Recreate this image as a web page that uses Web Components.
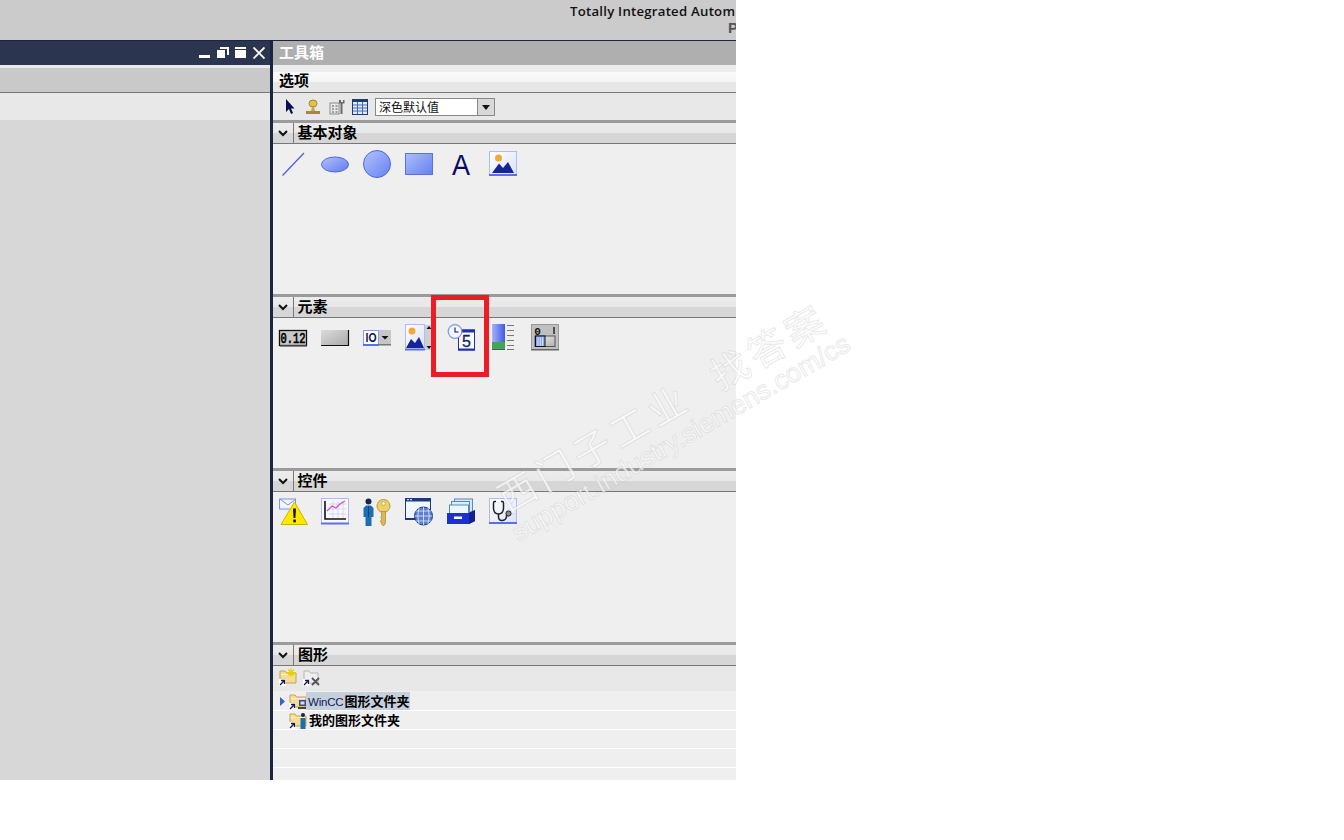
<!DOCTYPE html>
<html>
<head>
<meta charset="utf-8">
<title>工具箱</title>
<style>
html,body{margin:0;padding:0;background:#fff;}
body{width:1344px;height:840px;overflow:hidden;position:relative;font-family:"Liberation Sans","Noto Sans CJK SC",sans-serif;}
</style>
</head>
<body>
<tia-app>
    <tia-left-panel slot="left"></tia-left-panel>
    <tia-toolbox slot="right">
        <tool-section label="基本对象" height="150">
            <tool-icon name="line"></tool-icon><tool-icon name="ellipse"></tool-icon><tool-icon name="circle"></tool-icon><tool-icon name="rect"></tool-icon><tool-icon name="text"></tool-icon><tool-icon name="image"></tool-icon>
        </tool-section>
        <tool-section label="元素" height="150">
            <tool-icon name="iofield"></tool-icon><tool-icon name="button"></tool-icon><tool-icon name="symbolic"></tool-icon><tool-icon name="graphicio"></tool-icon><tool-icon name="clock"></tool-icon><tool-icon name="bar"></tool-icon><tool-icon name="switch"></tool-icon>
        </tool-section>
        <tool-section label="控件" height="150">
            <tool-icon name="alarm"></tool-icon><tool-icon name="trend"></tool-icon><tool-icon name="user"></tool-icon><tool-icon name="browser"></tool-icon><tool-icon name="recipe"></tool-icon><tool-icon name="diag"></tool-icon>
        </tool-section>
        <graphics-section></graphics-section>
    </tia-toolbox>
</tia-app>
<red-mark></red-mark>
<water-mark></water-mark>

<script>
//svg bodies for the toolbox icons, all on a 28x28 box
const ICONS = {
    line: `<path d="M3.5 25.5L25 3" stroke="#4a5ce6" stroke-width="1.2" fill="none"/>`,
    ellipse: `<defs><linearGradient id="g" x1="0" y1="0" x2="1" y2="1"><stop offset="0" stop-color="#b4c4fb"/><stop offset="1" stop-color="#5f78f0"/></linearGradient></defs>
        <ellipse cx="14" cy="14.5" rx="13.5" ry="7.5" fill="url(#g)" stroke="#4e66e6"/>`,
    circle: `<defs><linearGradient id="g" x1="0" y1="0" x2="1" y2="1"><stop offset="0" stop-color="#b4c4fb"/><stop offset="1" stop-color="#6580f2"/></linearGradient></defs>
        <circle cx="14" cy="14" r="13.5" fill="url(#g)" stroke="#4e66e6"/>`,
    rect: `<defs><linearGradient id="g" x1="0" y1="0" x2="1" y2="1"><stop offset="0" stop-color="#aebffa"/><stop offset="1" stop-color="#6580f2"/></linearGradient></defs>
        <rect x=".5" y="3.5" width="27" height="21" fill="url(#g)" stroke="#5a70ea"/>`,
    text: `<text x="14" y="25" text-anchor="middle" font-family="Liberation Sans" font-size="30" fill="#0a0a66" textLength="18" lengthAdjust="spacingAndGlyphs">A</text>`,
    image: `<defs><linearGradient id="g" x1="0" y1="0" x2="1" y2="1"><stop offset="0" stop-color="#fff"/><stop offset="1" stop-color="#d9e2fb"/></linearGradient></defs>
        <rect x=".5" y="1.5" width="27" height="24" fill="url(#g)" stroke="#b0bcf0"/>
        <rect x="0" y="24" width="28" height="2" fill="#5a70ea"/>
        <circle cx="9.5" cy="8" r="3.5" fill="#f3a93a"/>
        <path d="M3 23L10 13.5L14 18L19 12L25 23Z" fill="#15249c"/>`,
    iofield: `<rect x=".5" y="6.5" width="27" height="15" fill="#c8c8c8" stroke="#111" stroke-width="1.300"/><rect x="1" y="21" width="27" height="1.5" fill="#444"/>
        <text x="14" y="19" text-anchor="middle" font-family="Liberation Mono" font-size="15" fill="#000" stroke="#000" stroke-width=".7" textLength="25" lengthAdjust="spacingAndGlyphs">0.12</text>`,
    button: `<defs><linearGradient id="g" x1="0" y1="0" x2="1" y2="1"><stop offset="0" stop-color="#dcdcdc"/><stop offset="1" stop-color="#a8a8a8"/></linearGradient></defs>
        <rect x="0" y="6" width="28" height="16" fill="url(#g)"/><path d="M0 21.500H27.500V6" fill="none" stroke="#111" stroke-width="1.2"/>`,
    symbolic: `<rect x=".5" y="6.5" width="15" height="15" fill="#fff" stroke="#8a9cf0"/><rect x="0" y="20" width="16" height="2" fill="#5a70ea"/>
        <text x="8" y="18" text-anchor="middle" font-family="Liberation Sans" font-weight="700" font-size="13" fill="#10105e" textLength="11" lengthAdjust="spacingAndGlyphs">IO</text>
        <rect x="16" y="6" width="12" height="15" fill="#c6c6c6"/><rect x="16" y="20" width="12" height="1.5" fill="#777"/>
        <path d="M18.5 12H25.5L22 15.5Z" fill="#111"/>`,
    graphicio: `<defs><linearGradient id="g" x1="0" y1="0" x2="1" y2="1"><stop offset="0" stop-color="#fff"/><stop offset="1" stop-color="#d9e2fb"/></linearGradient></defs>
        <rect x=".5" y=".5" width="19" height="25" fill="url(#g)" stroke="#b0bcf0"/><rect x="0" y="24.5" width="20" height="2" fill="#5a70ea"/>
        <circle cx="7" cy="7" r="3.5" fill="#f3a93a"/><path d="M1 24L6 15L10 19L14 13L19 24Z" fill="#15249c"/>
        <rect x="20" y="1" width="8" height="25" fill="#cfcfcf"/><path d="M21.5 5H26.5L24 2ZM21.5 22H26.5L24 25Z" fill="#111"/>`,
    clock: `<rect x="11.5" y="6" width="16" height="20" fill="#fff" stroke="#1d2fb4"/><rect x="11" y="5.5" width="17" height="3" fill="#1d2fb4"/><rect x="11" y="24.5" width="17" height="2" fill="#1d2fb4"/>
        <text x="19.5" y="23" text-anchor="middle" font-family="Liberation Sans" font-size="16" fill="#0f1a66" stroke="#0f1a66" stroke-width=".3">5</text>
        <circle cx="8" cy="7.5" r="6.8" fill="#f3f5ff" stroke="#8094ee" stroke-width="1.2"/><path d="M8 3.5V8H11.5" fill="none" stroke="#10185e" stroke-width="1.1"/>`,
    bar: `<defs><linearGradient id="g" x1="0" y1="0" x2="1" y2="0"><stop offset="0" stop-color="#a3b4f8"/><stop offset="1" stop-color="#3f5ae8"/></linearGradient></defs>
        <rect x="3" y="0" width="13" height="18" fill="url(#g)"/><rect x="3" y="18" width="13" height="6.5" fill="#3fa55a"/><rect x="3" y="24.5" width="13" height="1.5" fill="#2c6a3c"/>
        <path d="M18 1.500H25M18 6.500H25M18 11.500H25M18 16.500H25M18 21.500H25M18 25.500H25" stroke="#777" stroke-width="1"/>`,
    'switch': `<defs><linearGradient id="g" x1="0" y1="0" x2="1" y2="1"><stop offset="0" stop-color="#f2f2f2"/><stop offset="1" stop-color="#b0b0b0"/></linearGradient></defs>
        <rect x=".5" y=".5" width="27" height="25" fill="#c0c0c0" stroke="#999"/><rect x="0" y="25" width="28" height="1.5" fill="#666"/>
        <text x="6.5" y="10.5" text-anchor="middle" font-family="Liberation Mono" font-weight="700" font-size="11" fill="#111">0</text><path d="M23 3V10" stroke="#111" stroke-width="1.3"/>
        <rect x="4" y="12" width="20" height="10.5" fill="url(#g)" stroke="#555"/>
        <rect x="4.5" y="12" width="9.5" height="10.5" fill="#8ea4f6" stroke="#111"/><path d="M7 13V22M9.3 13V22M11.6 13V22" stroke="#d8e0ff"/>`,
    alarm: `<rect x="0.500" y="1" width="16" height="10" fill="#f2f4ff" stroke="#7d90ea"/><path d="M1 1L9 7L17 1" fill="none" stroke="#7d90ea"/>
        <path d="M15.500 4L28.500 26.500H2Z" fill="#ffe900" stroke="#c9b400"/><path d="M14 10.500H17L16.400 20H14.600Z" fill="#111"/><rect x="14.300" y="21.500" width="2.500" height="2.800" fill="#111"/>`,
    trend: `<rect x=".5" y=".5" width="27" height="25" fill="#f7f8ff" stroke="#b0bcf0"/><rect x="0" y="24.5" width="28" height="2" fill="#5a70ea"/>
        <path d="M8 6H25M8 11H25M8 16H25M12 3V20M17 3V20M22 3V20" stroke="#d5d7e6"/>
        <path d="M4 3V21H25" fill="none" stroke="#111" stroke-width="1.6"/><path d="M6 13L11 8L15 10L19 6L24 3" fill="none" stroke="#d24be0" stroke-width="1.3"/>`,
    user: `<circle cx="5.500" cy="3.500" r="3" fill="#1a2250"/>
        <path d="M.5 10L3 7.500H8L10.500 10V19H8.500V28H2.500V19H.5Z" fill="#1c6eb2"/><path d="M5.500 8V19" stroke="#0f3f78"/>
        <circle cx="20.500" cy="8" r="6.500" fill="#f0cf6a" stroke="#b79a3a"/><circle cx="20.500" cy="5.500" r="1.800" fill="#fff" stroke="#a08a38" stroke-width=".6"/>
        <path d="M18.500 13.500H22.500V25L20.500 28L18.500 26V24.500L17 23.500L18.500 22V20.500L17.500 19.500L18.500 18.500Z" fill="#ddb850" stroke="#a08a38" stroke-width=".7"/>`,
    browser: `<rect x=".5" y=".5" width="25" height="21" fill="#f4f6ff" stroke="#1b3a7c"/><rect x="0" y="0" width="26" height="3.5" fill="#1b3a7c"/>
        <path d="M2 1.700H4M5 1.700H7" stroke="#fff"/><rect x="0" y="20" width="12" height="2" fill="#1b3a7c"/>
        <circle cx="18.500" cy="18" r="9" fill="#5d7fd0" stroke="#1a3b8a"/>
        <path d="M9.500 18H27.500M11 13H26M11 23H26M18.500 9V27M14 10Q11.500 18 14 26M23 10Q25.500 18 23 26" fill="none" stroke="#e4eaff" stroke-width=".8"/>`,
    recipe: `<rect x="7.500" y="1" width="18" height="13" fill="#d4e7f7" stroke="#5a89b8"/><rect x="4.500" y="3.500" width="18" height="13" fill="#dcecf9" stroke="#5a89b8"/><rect x="2.500" y="7" width="19" height="12" fill="#eef6fd" stroke="#5a89b8"/>
        <path d="M0 15H22L28 12V23L22 26H0Z" fill="#1c2fd0"/><path d="M22 15V26L28 23V12Z" fill="#142090"/><rect x="7" y="18.500" width="8" height="2.500" fill="#fff"/>`,
    diag: `<defs><linearGradient id="g" x1="0" y1="0" x2="1" y2="1"><stop offset="0" stop-color="#fff"/><stop offset="1" stop-color="#dbe3fb"/></linearGradient></defs>
        <rect x=".5" y=".5" width="27" height="25" fill="url(#g)" stroke="#b0bcf0"/><rect x="0" y="24" width="28" height="2" fill="#5a70ea"/>
        <path d="M7 3.500H5.500Q4.500 3.500 4.500 5V10.500Q5 16 9.500 16Q14 16 14.500 10.500V5Q14.500 3.500 13.500 3.500H12" fill="none" stroke="#222" stroke-width="1.5"/>
        <path d="M9.500 16V19.500Q10 23 13.500 22.500Q17 22 17.500 19V17" fill="none" stroke="#222" stroke-width="1.5"/><circle cx="19.500" cy="15.500" r="2.600" fill="#8a8a8a" stroke="#222"/>`
}

//outer frame: title strip on top, then the two panels
class TiaApp extends HTMLElement{
    constructor(){
        super();
        this.attachShadow({mode: 'open'}).innerHTML = `
        <style>
            :host{display:flex;flex-direction:column;width:736px;height:780px;overflow:hidden;background:#cbcbcb;}
            .top{height:40px;flex:none;background:#cbcbcb;box-sizing:border-box;padding:3px 0 0 570px;white-space:nowrap;overflow:hidden;}
            .name{font:13.2px/17px "Open Sans","Liberation Sans",sans-serif;font-weight:600;color:#111;letter-spacing:.24px;}
            .portal{font:bold 15px/16px "Liberation Sans",sans-serif;color:#555;margin-left:158px;}
            .main{flex:1;display:flex;min-height:0;border-top:1px solid #1c2540;}
            .left{width:270px;flex:none;display:flex;}
            .bar{width:3px;flex:none;background:#1c2540;}
            .right{flex:1;min-width:0;display:flex;overflow:hidden;}
            ::slotted(*){flex:1;min-width:0;}
        </style>
        <div class="top">
            <div class="name">Totally Integrated Autom</div>
            <div class="portal">P</div>
        </div>
        <div class="main">
            <div class="left"><slot name="left"></slot></div>
            <div class="bar"></div>
            <div class="right"><slot name="right"></slot></div>
        </div>
        `
    }
}

class TiaLeftPanel extends HTMLElement{
    constructor(){
        super();
        this.attachShadow({mode: 'open'}).innerHTML = `
        <style>
            :host{display:flex;flex-direction:column;background:#d7d7d7;}
            .title{height:24px;background:#2c3550;display:flex;justify-content:flex-end;align-items:center;padding-right:5px;gap:6px;}
            .title svg{display:block;width:12px;height:12px;fill:#fff;}
            .gap{height:3px;background:#e8e8e8;}
            .head{height:24px;background:#c9c9c9;border-bottom:1px solid #777;}
            .row{height:27px;background:#e8e8e8;}
        </style>
        <div class="title">
            <svg viewBox="0 0 12 12"><rect x="0" y="8" width="11" height="3"/></svg>
            <svg viewBox="0 0 12 12"><path d="M3 0H12V8H10V2H3Z"/><rect x="0" y="3" width="8" height="8"/></svg>
            <svg viewBox="0 0 12 12"><rect x="0" y="0" width="11" height="2"/><rect x="0" y="3" width="11" height="8"/></svg>
            <svg viewBox="0 0 12 12"><path d="M.5 .5L11.500 11.500M11.500 .5L.5 11.500" stroke="#fff" stroke-width="1.9"/></svg>
        </div>
        <div class="gap"></div>
        <div class="head"></div>
        <div class="row"></div>
        `
    }
}

class TiaToolbox extends HTMLElement{
    constructor(){
        super();
        this.attachShadow({mode: 'open'}).innerHTML = `
        <style>
            :host{display:block;background:#efefef;font-family:"Noto Sans CJK SC",sans-serif;height:739px;overflow:hidden;}
            .title{height:24px;background:#afafaf;color:#fff;font-size:15px;font-weight:700;line-height:21px;padding-left:6px;}
            .gap{height:7px;background:#ececec;}
            .opt{height:20px;background:linear-gradient(#fbfbfb 0,#f4f4f4 50%,#e6e6e6 50%,#e6e6e6 100%);border-bottom:1px solid #777;color:#000;font-size:15px;font-weight:700;line-height:16px;padding-left:6px;}
            .tools{height:27px;background:#e8e8e8;display:flex;align-items:center;padding-left:12px;box-sizing:border-box;}
            .tools svg{display:block;width:16px;height:16px;flex:none;margin-right:7.5px;}
            .tools svg.arrow{width:10px;margin-right:10px;}
        </style>
        <div class="title">工具箱</div>
        <div class="gap"></div>
        <div class="opt">选项</div>
        <div class="tools">
            <svg class="arrow" viewBox="0 0 10 16"><path d="M1 0V13L4 10L6 15L8 14L6 9.500H9.500Z" fill="#0a0f4e"/></svg>
            <svg viewBox="0 0 16 16"><ellipse cx="8" cy="4.500" rx="4" ry="3.500" fill="#e3c24a" stroke="#a5872a"/><path d="M7 8H9L10 12H6Z" fill="#c9a838"/><rect x="1" y="12" width="14" height="3" fill="#a78a2c"/></svg>
            <svg viewBox="0 0 16 16"><rect x="1" y="4" width="9" height="11" fill="#e8e8e8" stroke="#8a8a8a"/><path d="M3 7H5M6.500 7H8.500M3 10H5M6.500 10H8.500M3 13H5M6.500 13H8.500" stroke="#555"/><path d="M10 1V4.500H11.500V15H13.500V4.500H15.500V1H14V3H12V1Z" fill="#6a6a6a"/></svg>
            <svg viewBox="0 0 16 16"><rect x=".5" y=".5" width="15" height="15" fill="#e6ecfb" stroke="#1c3a7c"/><rect x="0" y="0" width="16" height="3" fill="#1c3a7c"/><path d="M5.500 3V15M10.500 3V15M1 6H15M1 9H15M1 12H15" stroke="#3f66b8"/></svg>
            <tool-select value="深色默认值"></tool-select>
        </div>
        <slot></slot>
        `
    }
}

class ToolSelect extends HTMLElement{
    constructor(){
        super();
        this.attachShadow({mode: 'open'}).innerHTML = `
        <style>
            :host{display:flex;width:120px;height:18px;box-sizing:border-box;border:1px solid #888;background:#fff;flex:none;margin:1px 0 0 -.5px;}
            .val{flex:1;font:12px/16px "Noto Sans CJK SC",sans-serif;color:#111;padding-left:3px;}
            .btn{width:16px;background:#d8d8d8;border-left:1px solid #888;display:flex;align-items:center;justify-content:center;}
            .btn svg{width:8px;height:5px;display:block;}
        </style>
        <div class="val"></div>
        <div class="btn"><svg viewBox="0 0 8 5"><path d="M0 0H8L4 5Z" fill="#111"/></svg></div>
        `
    }
    connectedCallback(){
        this.shadowRoot.querySelector('.val').innerText = this.getAttribute('value')
    }
}

//collapsible pane of the toolbox: gray rule, header, icon row
class ToolSection extends HTMLElement{
    constructor(){
        super();
        this.attachShadow({mode: 'open'}).innerHTML = `
        <style>
            :host{display:block;font-family:"Noto Sans CJK SC",sans-serif;}
            .rule{height:3px;background:#9b9b9b;}
            .head{height:20px;display:flex;background:linear-gradient(#ececec 0,#e8e8e8 50%,#d6d6d6 50%,#d6d6d6 100%);border-bottom:1px solid #777;}
            .chev{width:20px;flex:none;border-right:1px solid #777;display:flex;align-items:center;justify-content:center;}
            .chev svg{width:10px;height:7px;display:block;}
            .label{padding-left:3.500px;font-size:15px;font-weight:700;line-height:18px;color:#000;}
            .body{display:flex;gap:14px;align-items:flex-start;padding:6px 0 0 6px;box-sizing:border-box;background:#efefef;}
        </style>
        <div class="rule"></div>
        <div class="head">
            <div class="chev"><svg viewBox="0 0 10 7"><path d="M1 1L5 5L9 1" fill="none" stroke="#111" stroke-width="2"/></svg></div>
            <div class="label"></div>
        </div>
        <div class="body"><slot></slot></div>
        `
    }
    connectedCallback(){
        this.shadowRoot.querySelector('.label').innerText = this.getAttribute('label')
        this.shadowRoot.querySelector('.body').style.height = this.getAttribute('height') + 'px'
    }
}

class ToolIcon extends HTMLElement{
    constructor(){
        super();
        this.attachShadow({mode: 'open'})
    }
    connectedCallback(){
        this.shadowRoot.innerHTML = `
        <style>
            :host{display:block;width:28px;height:28px;flex:none;}
            svg{display:block;overflow:visible;}
        </style>
        <svg width="28" height="28" viewBox="0 0 28 28">${ICONS[this.getAttribute('name')]}</svg>
        `
    }
}

//last pane, holds a small toolbar and the folder tree
class GraphicsSection extends HTMLElement{
    constructor(){
        super();
        const folder = `<path d="M1 3H6L7.500 5H17V15H1Z" fill="#f8dc92" stroke="#c8a150"/><path d="M2 6H16V7H2Z" fill="#fff3cf"/>`
        const link = `<rect x="0" y="11" width="6.500" height="7" fill="#fff"/><path d="M1 17L5 13M2 12.500H5.500V16" fill="none" stroke="#10185e" stroke-width="1.300"/>`
        this.attachShadow({mode: 'open'}).innerHTML = `
        <style>
            :host{display:block;font-family:"Noto Sans CJK SC",sans-serif;}
            .rule{height:3px;background:#9b9b9b;}
            .head{height:20px;display:flex;background:linear-gradient(#ececec 0,#e8e8e8 50%,#d6d6d6 50%,#d6d6d6 100%);border-bottom:1px solid #777;}
            .chev{width:20px;flex:none;border-right:1px solid #777;display:flex;align-items:center;justify-content:center;}
            .chev svg{width:10px;height:7px;display:block;}
            .label{padding-left:4px;font-size:15px;font-weight:700;line-height:18px;color:#000;}
            .tools{height:26px;background:linear-gradient(#e8e8e8 25px,#efefef 25px);display:flex;gap:6px;padding:2px 0 0 6px;box-sizing:border-box;}
            svg.i{width:18px;height:18px;display:block;flex:none;}
            .row{height:18px;border-bottom:1px solid #fff;background:#efefef;display:flex;align-items:center;padding-left:6px;font-size:13px;font-weight:700;color:#000;line-height:18px;}
            .tw{width:10px;flex:none;}
            .tw svg{display:block;width:5px;height:9px;margin-left:1px;}
            .txt{padding:0 1px 0 2px;white-space:nowrap;}
            .sel{background:#c5d0dc;margin-left:-1px;}
            .plain{margin-left:0;}
            .w{font:11.500px "Liberation Sans",sans-serif;color:#10185e;letter-spacing:-.2px;margin-right:1px;}
        </style>
        <div class="rule"></div>
        <div class="head">
            <div class="chev"><svg viewBox="0 0 10 7"><path d="M1 1L5 5L9 1" fill="none" stroke="#111" stroke-width="2"/></svg></div>
            <div class="label">图形</div>
        </div>
        <div class="tools">
            <svg class="i" viewBox="0 0 18 18">${folder}${link}<path d="M12 0V9M7.500 4.500H16.500M9 1.500L15 7.500M15 1.500L9 7.500" stroke="#e8d000" stroke-width="1.200"/></svg>
            <svg class="i" viewBox="0 0 18 18"><path d="M1 3H6L7.500 5H15V15H1Z" fill="#efefef" stroke="#b5b5b5"/>${link}<path d="M9 10L16 17M16 10L9 17" stroke="#555" stroke-width="1.800"/></svg>
        </div>
        <div class="row">
            <div class="tw"><svg viewBox="0 0 5 9"><path d="M0 0L5 4.500L0 9Z" fill="#2e62d0"/></svg></div>
            <svg class="i" viewBox="0 0 18 18">${folder}${link}<rect x="10" y="8" width="7" height="6" fill="#3a4a7c"/><rect x="11.500" y="9.500" width="4" height="3" fill="#cfe0ff"/><rect x="9" y="15" width="9" height="2" fill="#444"/></svg>
            <div class="txt sel"><span class="w">WinCC</span>图形文件夹</div>
        </div>
        <div class="row">
            <div class="tw"></div>
            <svg class="i" viewBox="0 0 18 18">${folder}${link}<circle cx="14" cy="4" r="2" fill="#1a2250"/><path d="M11.500 7H16.500V18H11.500Z" fill="#1c6eb2"/></svg>
            <div class="txt plain">我的图形文件夹</div>
        </div>
        <div class="row"></div>
        <div class="row"></div>
        <div class="row"></div>
        `
    }
}

//red hand drawn box round the clock icon
class RedMark extends HTMLElement{
    constructor(){
        super();
        this.attachShadow({mode: 'open'}).innerHTML = `
        <style>
            :host{position:absolute;left:431px;top:295px;width:58px;height:82px;box-sizing:border-box;border:5px solid #ed1c24;}
        </style>
        `
    }
}

//site watermark that runs across the panel
class WaterMark extends HTMLElement{
    constructor(){
        super();
        this.attachShadow({mode: 'open'}).innerHTML = `
        <style>
            :host{position:absolute;left:0;top:0;pointer-events:none;}
            div{position:absolute;white-space:nowrap;transform-origin:0 50%;transform:rotate(-30deg);color:rgba(255,255,255,.7);-webkit-text-stroke:1.2px rgba(165,165,165,.22);}
            .a{left:500px;top:476px;font:38px/48px "Noto Sans CJK SC",sans-serif;letter-spacing:5px;}
            .a span{margin-left:30px;}
            .b{left:514px;top:519px;font:26.600px/30px "Liberation Sans",sans-serif;}
        </style>
        <div class="a">西门子工业<span>找答案</span></div>
        <div class="b">support.industry.siemens.com/cs</div>
        `
    }
}

customElements.define('tool-icon', ToolIcon)
customElements.define('tool-select', ToolSelect)
customElements.define('tool-section', ToolSection)
customElements.define('graphics-section', GraphicsSection)
customElements.define('tia-left-panel', TiaLeftPanel)
customElements.define('tia-toolbox', TiaToolbox)
customElements.define('tia-app', TiaApp)
customElements.define('red-mark', RedMark)
customElements.define('water-mark', WaterMark)
</script>
</body>
</html>
